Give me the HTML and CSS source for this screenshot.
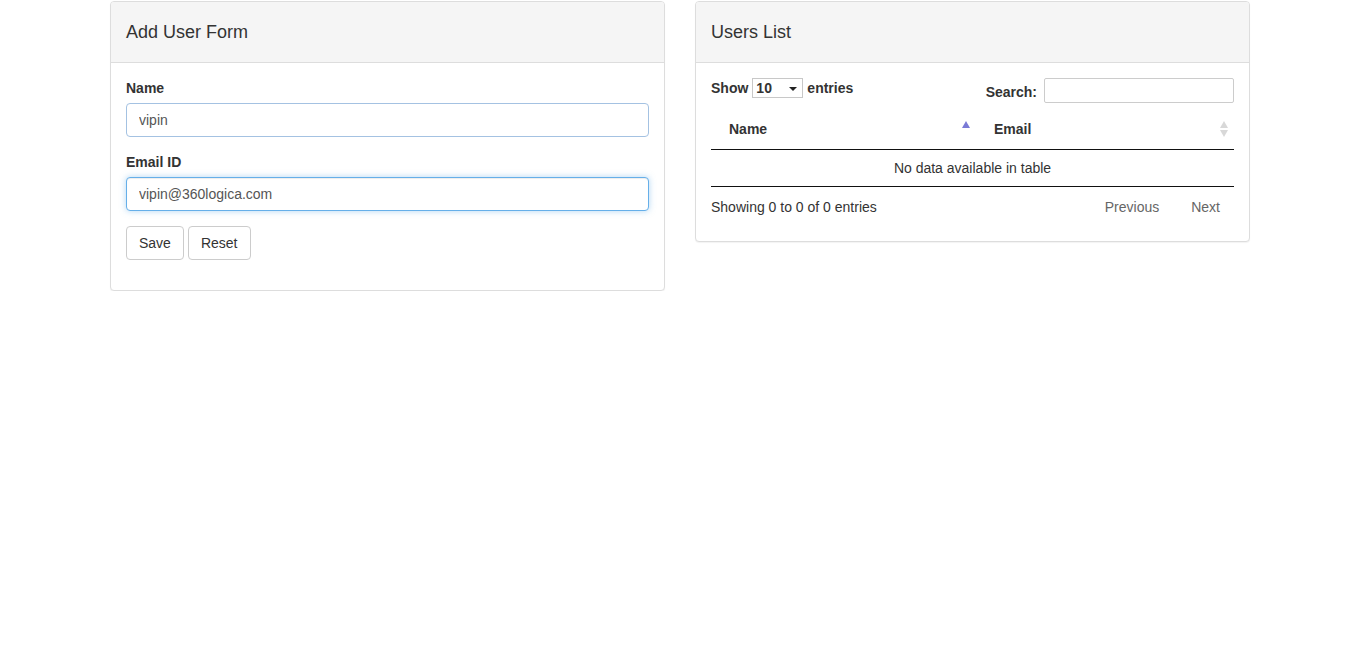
FILE: index.html
```html
<!DOCTYPE html>
<html>
<head>
<meta charset="utf-8">
<link rel="stylesheet" href="styles.css">
</head>
<body>
<div class="container">
  <div class="col">
    <div class="panel">
      <div class="panel-heading"><h3 class="panel-title">Add User Form</h3></div>
      <div class="panel-body">
        <div class="form-group">
          <label class="lbl">Name</label>
          <input class="form-control filled" type="text" value="vipin">
        </div>
        <div class="form-group">
          <label class="lbl">Email ID</label>
          <input class="form-control focused" type="text" value="vipin@360logica.com">
        </div>
        <div class="form-group btn-row">
          <button class="btn">Save</button>
          <button class="btn">Reset</button>
        </div>
      </div>
    </div>
  </div>
  <div class="col">
    <div class="panel">
      <div class="panel-heading"><h3 class="panel-title">Users List</h3></div>
      <div class="panel-body">
        <div class="dt-top">
          <div class="dt-length">
            <span>Show</span>
            <span class="select-wrap">
              <select class="dt-select"><option>10</option></select>
              <span class="select-arrow"></span>
            </span>
            <span>entries</span>
          </div>
          <div class="dt-filter">
            <span>Search:</span>
            <input class="dt-search" type="search">
          </div>
        </div>
        <table class="dt-table">
          <thead>
            <tr>
              <th class="col-name">Name<span class="sort-asc"></span></th>
              <th class="col-email">Email<span class="sort-both"><span class="up"></span><span class="down"></span></span></th>
            </tr>
          </thead>
          <tbody>
            <tr><td colspan="2" class="empty">No data available in table</td></tr>
          </tbody>
        </table>
        <div class="dt-bottom">
          <div class="dt-info">Showing 0 to 0 of 0 entries</div>
          <div class="dt-paginate">
            <span class="pg-btn">Previous</span>
            <span class="pg-btn">Next</span>
          </div>
        </div>
      </div>
    </div>
  </div>
</div>
</body>
</html>
```

FILE: styles.css
```css
* { box-sizing: border-box; }
html, body {
  margin: 0;
  padding: 0;
  background: #fff;
  font-family: "Liberation Sans", Arial, Helvetica, sans-serif;
  font-size: 14px;
  line-height: 20px;
  color: #333;
}
.container {
  width: 1170px;
  margin: 0 auto;
  padding: 1px 0 0;
  display: flex;
}
.col {
  width: 585px;
  padding: 0 15px;
}
.panel {
  border: 1px solid #ddd;
  border-radius: 4px;
  background: #fff;
  box-shadow: 0 1px 1px rgba(0,0,0,.05);
}
.panel-heading {
  background: #f5f5f5;
  border-bottom: 1px solid #ddd;
  border-radius: 3px 3px 0 0;
  height: 61px;
  padding: 0 15px;
  display: flex;
  align-items: center;
}
.panel-title {
  margin: 0;
  font-size: 18px;
  font-weight: normal;
  line-height: 20px;
  color: #333;
  padding-top: 0;
}
.panel-body {
  padding: 15px;
}
.form-group {
  margin-bottom: 15px;
}
.lbl {
  display: block;
  font-weight: bold;
  margin-bottom: 5px;
  line-height: 20px;
}
.form-control {
  display: block;
  width: 100%;
  height: 34px;
  padding: 6px 12px;
  font-family: inherit;
  font-size: 14px;
  line-height: 20px;
  color: #555;
  background: #fff;
  border: 1px solid #ccc;
  border-radius: 4px;
  outline: none;
}
.form-control.filled {
  border-color: #a4c2e2;
}
.form-control.focused {
  border-color: #66afe9;
  box-shadow: inset 0 1px 1px rgba(0,0,0,.075), 0 0 6px rgba(102,175,233,.5);
}
.btn-row {
  display: flex;
  gap: 4px;
}
.btn {
  height: 34px;
  padding: 6px 12px;
  font-family: inherit;
  font-size: 14px;
  line-height: 20px;
  color: #333;
  background: #fff;
  border: 1px solid #ccc;
  border-radius: 4px;
}
.dt-top {
  display: flex;
  justify-content: space-between;
  align-items: flex-start;
  height: 25px;
}
.dt-length {
  display: flex;
  align-items: center;
  font-weight: bold;
  height: 20px;
  gap: 4px;
}
.select-wrap {
  position: relative;
  display: inline-block;
  width: 51px;
  height: 20px;
}
.dt-select {
  -webkit-appearance: none;
  appearance: none;
  width: 51px;
  height: 20px;
  border: 1px solid #c8c8c8;
  border-radius: 0;
  background: #fff;
  font-family: inherit;
  font-size: 14px;
  font-weight: bold;
  color: #333;
  padding: 0 0 0 3px;
  line-height: 18px;
  outline: none;
}
.select-arrow {
  position: absolute;
  right: 6px;
  top: 9px;
  width: 0;
  height: 0;
  border-left: 4px solid transparent;
  border-right: 4px solid transparent;
  border-top: 4px solid #222;
}
.dt-filter {
  display: flex;
  align-items: center;
  font-weight: bold;
  height: 25px;
  padding-top: 2px;
}
.dt-search {
  margin-left: 7px;
  width: 190px;
  height: 25px;
  border: 1px solid #ccc;
  border-radius: 2px;
  margin-top: -2px;
  outline: none;
}
.dt-table {
  width: 100%;
  border-collapse: separate;
  border-spacing: 0;
  margin-top: 6px;
  border-bottom: 1px solid #111;
}
.dt-table th {
  position: relative;
  text-align: left;
  font-weight: bold;
  padding: 10px 18px;
  height: 40px;
  border-bottom: 1px solid #111;
}
.col-name { width: 265px; }
.sort-asc {
  position: absolute;
  right: 6px;
  top: 12px;
  width: 0;
  height: 0;
  border-left: 4px solid transparent;
  border-right: 4px solid transparent;
  border-bottom: 7px solid #7a7ad6;
}
.sort-both {
  position: absolute;
  right: 5px;
  top: 12px;
  width: 9px;
  height: 16px;
}
.sort-both .up,
.sort-both .down {
  position: absolute;
  left: 0;
  width: 0;
  height: 0;
  border-left: 4.5px solid transparent;
  border-right: 4.5px solid transparent;
}
.sort-both .up {
  top: 0;
  border-bottom: 7px solid #d8d8d8;
}
.sort-both .down {
  top: 9px;
  border-top: 7px solid #d8d8d8;
}
.dt-table td {
  padding: 8px 10px;
  height: 36px;
}
.dt-table td.empty {
  text-align: center;
}
.dt-bottom {
  display: flex;
  justify-content: space-between;
  height: 39px;
  padding-top: 10px;
}
.dt-paginate {
  display: flex;
  gap: 4px;
  margin-top: 0;
}
.pg-btn {
  display: inline-block;
  color: #666;
  padding: 0 14px;
  line-height: 20px;
  height: 20px;
}
.pg-btn:last-child {
  padding-right: 14px;
}
```
